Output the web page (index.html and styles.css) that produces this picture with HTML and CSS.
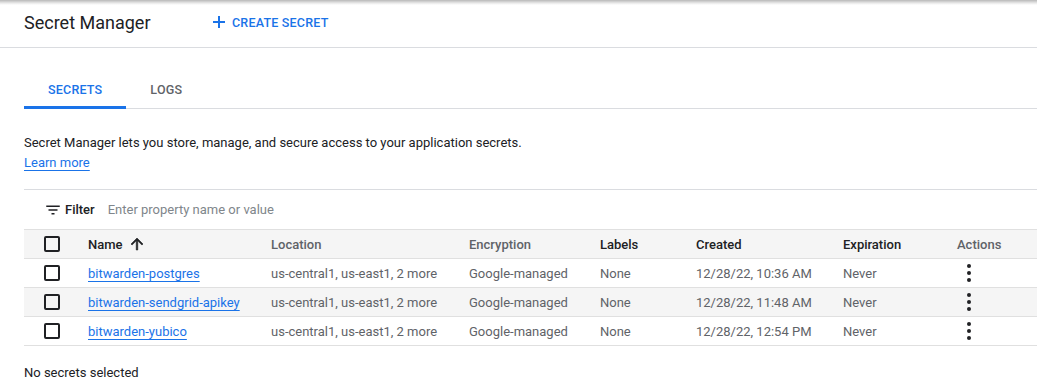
FILE: index.html
```html
<!DOCTYPE html>
<html lang="en">
<head>
    <meta charset="UTF-8">
    <title>Secret Manager</title>
    <link rel="stylesheet" href="styles.css">
</head>
<body>
    <div class="topbar"></div>
    <header class="header">
        <h1 class="title">Secret Manager</h1>
        <button class="create">
            <svg width="12" height="12" viewBox="0 0 12 12"><rect x="5" y="0" width="2" height="12" fill="currentColor"/><rect x="0" y="5" width="12" height="2" fill="currentColor"/></svg>
            CREATE SECRET
        </button>
    </header>

    <main class="content">
        <nav class="tabs">
            <div class="tab active">SECRETS</div>
            <div class="tab">LOGS</div>
        </nav>

        <p class="intro">Secret Manager lets you store, manage, and secure access to your application secrets.</p>
        <a class="learn" href="#">Learn more</a>

        <div class="filter">
            <svg class="filter-icon" width="18" height="18" viewBox="0 0 24 24"><path d="M10 18h4v-2h-4v2zM3 6v2h18V6H3zm3 7h12v-2H6v2z" fill="#202124"/></svg>
            <span class="filter-label">Filter</span>
            <span class="filter-input">Enter property name or value</span>
        </div>

        <div class="table">
            <div class="row head">
                <div class="cell"><span class="check"></span></div>
                <div class="cell dark">Name
                    <svg class="sort" width="18" height="18" viewBox="0 0 24 24"><path d="M4 12l1.41 1.41L11 7.83V20h2V7.83l5.58 5.59L20 12l-8-8-8 8z" fill="#202124" stroke="#202124" stroke-width="0.8"/></svg>
                </div>
                <div class="cell">Location</div>
                <div class="cell">Encryption</div>
                <div class="cell dark">Labels</div>
                <div class="cell dark">Created</div>
                <div class="cell dark">Expiration</div>
                <div class="cell">Actions</div>
            </div>

            <div class="row">
                <div class="cell"><span class="check"></span></div>
                <div class="cell"><a href="#">bitwarden-postgres</a></div>
                <div class="cell">us-central1, us-east1, 2 more</div>
                <div class="cell">Google-managed</div>
                <div class="cell">None</div>
                <div class="cell">12/28/22, 10:36 AM</div>
                <div class="cell">Never</div>
                <div class="cell"><span class="kebab"><i></i><i></i><i></i></span></div>
            </div>

            <div class="row hover">
                <div class="cell"><span class="check"></span></div>
                <div class="cell"><a href="#">bitwarden-sendgrid-apikey</a></div>
                <div class="cell">us-central1, us-east1, 2 more</div>
                <div class="cell">Google-managed</div>
                <div class="cell">None</div>
                <div class="cell">12/28/22, 11:48 AM</div>
                <div class="cell">Never</div>
                <div class="cell"><span class="kebab"><i></i><i></i><i></i></span></div>
            </div>

            <div class="row">
                <div class="cell"><span class="check"></span></div>
                <div class="cell"><a href="#">bitwarden-yubico</a></div>
                <div class="cell">us-central1, us-east1, 2 more</div>
                <div class="cell">Google-managed</div>
                <div class="cell">None</div>
                <div class="cell">12/28/22, 12:54 PM</div>
                <div class="cell">Never</div>
                <div class="cell"><span class="kebab"><i></i><i></i><i></i></span></div>
            </div>
        </div>

        <p class="selected">No secrets selected</p>
    </main>
</body>
</html>
```

FILE: styles.css
```css
* {
    box-sizing: border-box;
    margin: 0;
    padding: 0;
}

body {
    font-family: Roboto, Arial, sans-serif;
    font-size: 13px;
    color: #202124;
    background: #fff;
}

.topbar {
    height: 5px;
    background: linear-gradient(#b8b8b8, #e8e8e8 60%, #fff);
}

.header {
    display: flex;
    align-items: center;
    height: 43px;
    padding: 0 0 8px 24px;
    border-bottom: 1px solid #dadce0;
}

.title {
    font-size: 18px;
    font-weight: 400;
    width: 189px;
}

.create {
    display: flex;
    align-items: center;
    gap: 7px;
    background: none;
    border: none;
    color: #1a73e8;
    font-family: inherit;
    font-size: 12.5px;
    font-weight: 500;
    letter-spacing: 0.2px;
}

.content {
    padding-left: 24px;
}

.tabs {
    display: flex;
    margin-top: 12px;
    border-bottom: 1px solid #dadce0;
}

.tab {
    position: relative;
    height: 48px;
    line-height: 60px;
    padding: 0 24px;
    font-size: 12.5px;
    font-weight: 500;
    color: #5f6368;
    letter-spacing: 0.2px;
}

.tab.active {
    color: #1a73e8;
}

.tab.active::after {
    content: "";
    position: absolute;
    left: 0;
    right: 0;
    bottom: -1px;
    height: 3px;
    background: #1a73e8;
}

.intro {
    margin-top: 25px;
    line-height: 18px;
}

.learn {
    display: inline-block;
    margin-top: 2px;
    color: #1a73e8;
    line-height: 18px;
    text-decoration: underline;
    text-underline-offset: 3px;
}

.filter {
    display: flex;
    align-items: center;
    height: 40px;
    margin-top: 17px;
    padding-left: 20px;
    border-top: 1px solid #dadce0;
}

.filter-icon {
    margin-right: 3px;
}

.filter-label {
    font-weight: 500;
    margin-right: 13px;
}

.filter-input {
    color: #80868b;
}

.table {
    border-top: 1px solid #e0e0e0;
}

.row {
    display: grid;
    grid-template-columns: 64px 183px 198px 131px 96px 147px 114px 1fr;
    height: 29px;
    border-bottom: 1px solid #e0e0e0;
    color: #5f6368;
}

.row.head {
    background: #f5f5f5;
    font-weight: 500;
}

.row.hover {
    background: #f5f5f5;
}

.cell {
    display: flex;
    align-items: center;
    white-space: nowrap;
}

.cell.dark {
    color: #202124;
}

.cell:first-child {
    padding-left: 20px;
}

.check {
    width: 16px;
    height: 16px;
    border: 2px solid #202124;
    border-radius: 2px;
}

.sort {
    margin-left: 5px;
}

.cell a {
    color: #1a73e8;
    text-decoration: underline;
    text-underline-offset: 3px;
}

.kebab {
    display: flex;
    flex-direction: column;
    gap: 3px;
    margin-left: 10px;
}

.kebab i {
    width: 4px;
    height: 4px;
    border-radius: 50%;
    background: #202124;
}

.selected {
    margin-top: 18px;
    line-height: 18px;
}
```
